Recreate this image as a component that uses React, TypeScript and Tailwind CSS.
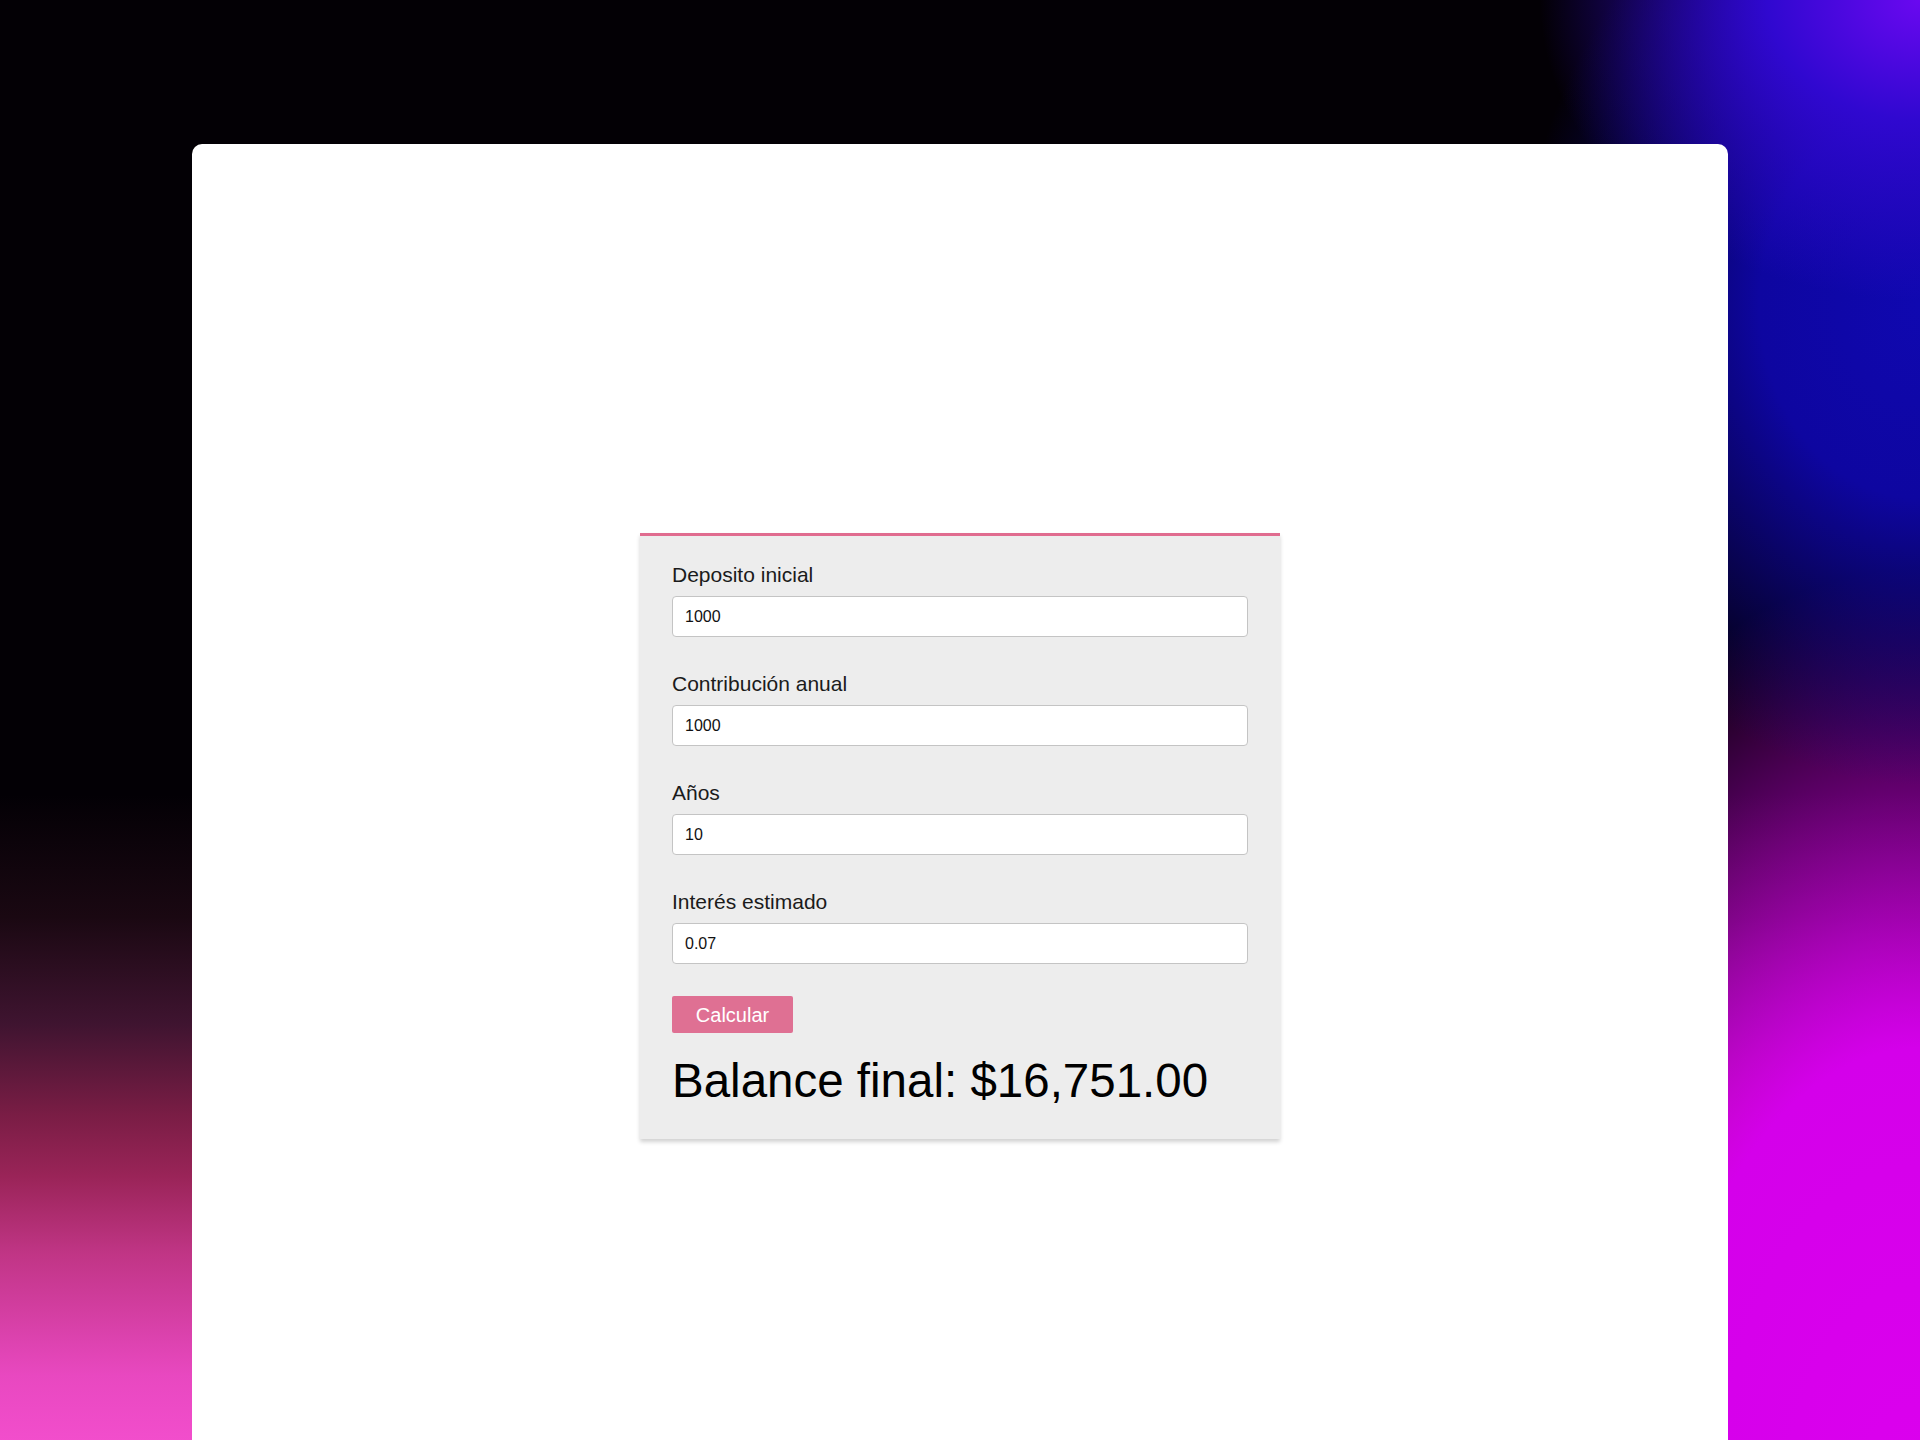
import { useState } from 'react'

const fields = [
  { label: 'Deposito inicial', value: '1000' },
  { label: 'Contribución anual', value: '1000' },
  { label: 'Años', value: '10' },
  { label: 'Interés estimado', value: '0.07' },
]

export default function App() {
  const [values, setValues] = useState(fields.map((f) => f.value))

  return (
    <div className="min-h-screen overflow-hidden bg-[#030005] bg-[radial-gradient(ellipse_380px_300px_at_100%_0%,#6a08f0_0%,#3008d0_40%,transparent_100%),radial-gradient(ellipse_400px_480px_at_100%_20%,#1008b0_0%,#0e06a0_40%,transparent_100%),radial-gradient(ellipse_540px_960px_at_100%_100%,#dc00ee_0%,#d400ea_50%,transparent_100%),linear-gradient(to_top,#ff55dc_0%,#e848c0_10%,#c03585_18%,#9a2458_23%,#7a1d45_27%,#3f1430_33%,#1a0812_40%,transparent_48%)] pt-[144px] font-['Liberation_Sans',Arial,sans-serif]">
      <div className="mx-[192px] h-[1384px] rounded-t-[10px] bg-white pt-[389px]">
        <div className="mx-auto w-[640px] border-t-[3px] border-[#e06c8f] bg-[#ededed] px-8 pb-[30px] pt-[27px] shadow-[0_3px_4px_rgba(0,0,0,0.18)]">
          {fields.map((f, i) => (
            <div key={f.label} className={`flex flex-col ${i === fields.length - 1 ? 'mb-[32px]' : 'mb-[35px]'}`}>
              <label className="mb-[9px] text-[21px] leading-6 text-[#1b1b1b]">{f.label}</label>
              <input
                value={values[i]}
                onChange={(e) => setValues(values.map((v, j) => (j === i ? e.target.value : v)))}
                className="h-[41px] rounded-[4px] border border-[#c4c4c4] bg-white px-3 text-[16px] text-[#111] outline-none"
              />
            </div>
          ))}
          <button className="h-[37px] w-[121px] rounded-[2px] bg-[#df7093] text-[20px] text-white">Calcular</button>
          <h2 className="mt-[20px] text-[47.5px] leading-[56px] text-black">Balance final: $16,751.00</h2>
        </div>
      </div>
    </div>
  )
}
